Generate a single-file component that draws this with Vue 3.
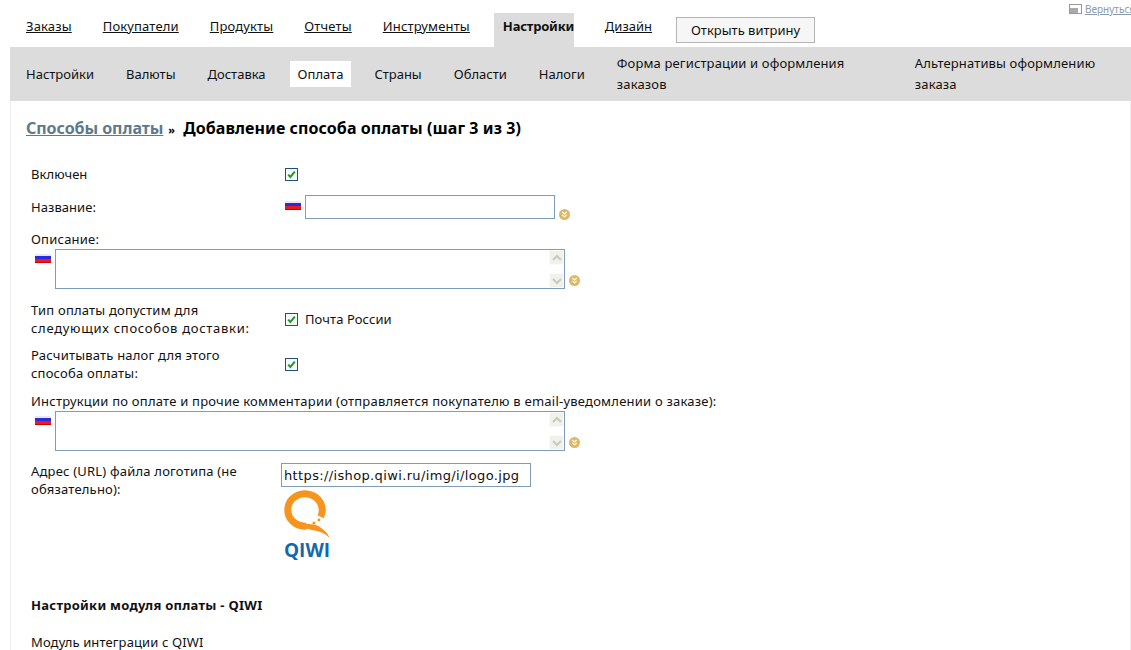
<script setup>
const mainTabs = ['Заказы', 'Покупатели', 'Продукты', 'Отчеты', 'Инструменты']
const subTabs = ['Настройки', 'Валюты', 'Доставка', 'Оплата', 'Страны', 'Области', 'Налоги']
</script>

<template>
  <div class="page">
    <a class="back" href="#">
      <svg width="13" height="10" viewBox="0 0 13 10"><rect x="0.5" y="0.5" width="12" height="9" fill="#fff" stroke="#999"/><rect x="1" y="4" width="8" height="5" fill="#aaa"/></svg>
      <span>Вернуться</span>
    </a>
    <nav class="main-nav">
      <a v-for="t in mainTabs" :key="t" href="#" class="main-link">{{ t }}</a>
      <span class="main-active">Настройки</span>
      <a href="#" class="main-link design">Дизайн</a>
      <button class="shop-btn" type="button">Открыть витрину</button>
    </nav>
    <div class="sub-nav">
      <span v-for="t in subTabs" :key="t" class="sub-item" :class="{ active: t === 'Оплата' }">{{ t }}</span>
      <span class="sub-item wide-a">Форма регистрации и оформления заказов</span>
      <span class="sub-item wide-b">Альтернативы оформлению заказа</span>
    </div>
    <main class="content">
      <h1 class="title"><a href="#">Способы оплаты</a><span class="raquo">»</span>Добавление способа оплаты (шаг 3 из 3)</h1>

      <div class="row r-enabled">
        <div class="label">Включен</div>
        <span class="check"><svg width="11" height="11" viewBox="0 0 11 11"><path d="M2.2 5.6 4.4 8 8.8 2.6" fill="none" stroke="#1f9a2c" stroke-width="2"/></svg></span>
      </div>

      <div class="row r-name">
        <div class="label">Название:</div>
        <span class="flag flag-name"></span>
        <input class="field name-input" type="text" />
        <span class="more"><svg width="11" height="11" viewBox="0 0 11 11"><circle cx="5.5" cy="5.5" r="5.5" fill="#dfb862"/><path d="M3.3 3 5.5 5 7.7 3M3.3 5.8 5.5 7.8 7.7 5.8" fill="none" stroke="#fff" stroke-width="1.1"/></svg></span>
      </div>

      <div class="block b-desc">
        <div class="label-full">Описание:</div>
        <div class="ta-row">
          <span class="flag"></span>
          <div class="ta-wrap">
            <textarea class="field area"></textarea>
            <span class="sb up"><svg width="12" height="8" viewBox="0 0 12 8"><path d="M2 6 6 2l4 4" fill="none" stroke="#c9c9c2" stroke-width="2"/></svg></span>
            <span class="sb down"><svg width="12" height="8" viewBox="0 0 12 8"><path d="M2 2l4 4 4-4" fill="none" stroke="#c9c9c2" stroke-width="2"/></svg></span>
          </div>
          <span class="more"><svg width="11" height="11" viewBox="0 0 11 11"><circle cx="5.5" cy="5.5" r="5.5" fill="#dfb862"/><path d="M3.3 3 5.5 5 7.7 3M3.3 5.8 5.5 7.8 7.7 5.8" fill="none" stroke="#fff" stroke-width="1.1"/></svg></span>
        </div>
      </div>

      <div class="row r-ship">
        <div class="label two">Тип оплаты допустим для <span class="stretch">следующих способов доставки:</span></div>
        <span class="check"><svg width="11" height="11" viewBox="0 0 11 11"><path d="M2.2 5.6 4.4 8 8.8 2.6" fill="none" stroke="#1f9a2c" stroke-width="2"/></svg></span>
        <span class="ship-name">Почта России</span>
      </div>

      <div class="row r-tax">
        <div class="label two">Расчитывать налог для этого способа оплаты:</div>
        <span class="check"><svg width="11" height="11" viewBox="0 0 11 11"><path d="M2.2 5.6 4.4 8 8.8 2.6" fill="none" stroke="#1f9a2c" stroke-width="2"/></svg></span>
      </div>

      <div class="block b-instr">
        <div class="label-full">Инструкции по оплате и прочие комментарии (отправляется покупателю в email-уведомлении о заказе):</div>
        <div class="ta-row">
          <span class="flag"></span>
          <div class="ta-wrap">
            <textarea class="field area"></textarea>
            <span class="sb up"><svg width="12" height="8" viewBox="0 0 12 8"><path d="M2 6 6 2l4 4" fill="none" stroke="#c9c9c2" stroke-width="2"/></svg></span>
            <span class="sb down"><svg width="12" height="8" viewBox="0 0 12 8"><path d="M2 2l4 4 4-4" fill="none" stroke="#c9c9c2" stroke-width="2"/></svg></span>
          </div>
          <span class="more"><svg width="11" height="11" viewBox="0 0 11 11"><circle cx="5.5" cy="5.5" r="5.5" fill="#dfb862"/><path d="M3.3 3 5.5 5 7.7 3M3.3 5.8 5.5 7.8 7.7 5.8" fill="none" stroke="#fff" stroke-width="1.1"/></svg></span>
        </div>
      </div>

      <div class="row r-logo">
        <div class="label two logo-label">Адрес (URL) файла логотипа (не обязательно):</div>
        <div class="logo-col">
          <input class="field url-input" type="text" value="https://ishop.qiwi.ru/img/i/logo.jpg" />
          <div class="logo">
            <svg width="46" height="49" viewBox="0 0 46 49">
              <path d="M36.6 26.8A17.2 16.2 0 1 0 22.5 36.1" fill="none" stroke="#f7941e" stroke-width="7"/>
              <path d="M18 33C24 35 30 33 36 37 40 40 44 43 45.5 48 41 43 35 41 28 40 24 39 20 38 18 36Z" fill="#f7941e"/>
              <circle cx="30" cy="33" r="1.6" fill="#f7941e"/>
              <circle cx="35" cy="30" r="1.4" fill="#f7941e"/>
            </svg>
            <span class="qiwi">QIWI</span>
          </div>
        </div>
      </div>

      <div class="section">Настройки модуля оплаты - QIWI</div>
      <div class="module">Модуль интеграции с QIWI</div>
    </main>
  </div>
</template>

<style>
html, body { margin: 0; overflow: hidden; background: #fff; }
</style>

<style scoped>
.page {
  position: relative;
  width: 1131px;
  height: 650px;
  overflow: hidden;
  padding: 13px 0 0 10px;
  box-sizing: border-box;
  font-family: "Noto Sans", "DejaVu Sans", sans-serif;
  font-size: 13px;
  color: #111;
}
.back {
  position: absolute;
  left: 1069px;
  top: 2px;
  display: flex;
  align-items: center;
  gap: 3px;
  color: #8a9aa8;
  font-size: 10px;
  white-space: nowrap;
}
.main-nav {
  display: flex;
  align-items: flex-start;
  height: 34px;
  padding-left: 16px;
}
.main-link {
  margin: 3px 31px 0 0;
  color: #111;
  line-height: 20px;
  text-decoration: underline;
  letter-spacing: 0.15px;
}
.main-active {
  flex: none;
  width: 80px;
  height: 34px;
  margin-left: -7px;
  padding: 3px 0 0 9px;
  box-sizing: border-box;
  background: #dcdcdc;
  font-weight: 700;
  letter-spacing: -0.2px;
  line-height: 20px;
  white-space: nowrap;
}
.design { margin-left: 31px; margin-right: 24px; letter-spacing: 0; }
.shop-btn {
  width: 139px;
  height: 26px;
  margin-top: 4px;
  border: 1px solid #b5b5b5;
  background: #f6f6f6;
  font: inherit;
  color: #111;
  padding: 0;
}
.sub-nav {
  display: flex;
  align-items: center;
  gap: 32px;
  height: 54px;
  padding-left: 16px;
  background: #dcdcdc;
}
.sub-item { line-height: 21px; }
.sub-item.active {
  background: #fff;
  padding: 3px 8px 2px;
  margin: 0 -9px 0 -8px;
}
.wide-a { width: 266px; letter-spacing: 0.14px; }
.wide-b { width: 200px; letter-spacing: 0.14px; }
.content {
  border-left: 1px solid #eee;
  border-right: 1px solid #eee;
  padding: 0 0 0 15px;
}
.title {
  margin: 0;
  padding-top: 17px;
  font-size: 16px;
  line-height: 20px;
  font-weight: 700;
  letter-spacing: 0.08px;
  color: #000;
}
.title a { color: #5d7a8c; text-decoration: underline; letter-spacing: -0.05px; }
.raquo { font-size: 11px; margin: 0 8px 0 5px; }
.row {
  display: flex;
  align-items: flex-start;
  padding-left: 5px;
}
.label { width: 254px; line-height: 18px; flex: none; letter-spacing: 0.05px; }
.label.two { width: 222px; margin-right: 32px; letter-spacing: 0.2px; }
.stretch { letter-spacing: 0.7px; white-space: nowrap; }
.check {
  width: 11px;
  height: 11px;
  flex: none;
  border: 1px solid #1c5180;
  background: #f8f8f8;
  display: block;
}
.check svg { display: block; }
.flag {
  display: block;
  flex: none;
  width: 16px;
  height: 11px;
  background: linear-gradient(#fff 0 2px, #e8e8ee 2px 4px, #2a2ae0 4px 7px, #f01818 7px 10px, #c00 10px);
}
.field {
  display: block;
  box-sizing: border-box;
  border: 1px solid #7f9db9;
  background: #fff;
  outline: none;
  margin: 0;
}
.more { display: block; flex: none; width: 11px; height: 11px; }
.more svg { display: block; }
.r-enabled { margin-top: 25px; height: 18px; align-items: center; }
.r-name { margin-top: 12px; height: 24px; }
.r-name .label { margin-top: 3px; }
.flag-name { margin: 4px 4px 0 0; }
.name-input { width: 250px; height: 24px; }
.r-name .more { margin: 14px 0 0 4px; }
.block { padding-left: 5px; }
.label-full { line-height: 18px; letter-spacing: 0.22px; }
.b-desc { margin-top: 11px; }
.ta-row { display: flex; align-items: flex-start; margin-top: 1px; padding-left: 4px; }
.ta-row .flag { margin: 3px 4px 0 0; }
.ta-wrap { position: relative; width: 510px; height: 40px; flex: none; }
.area { width: 510px; height: 40px; resize: none; overflow: hidden; }
.sb {
  position: absolute;
  right: 1px;
  width: 15px;
  height: 15px;
  background: #f1f1ec;
  display: flex;
  align-items: center;
  justify-content: center;
  box-shadow: inset 0 0 0 1px #fafaf8;
}
.up { top: 1px; }
.down { bottom: 1px; }
.ta-row .more { margin: 26px 0 0 4px; }
.r-ship { margin-top: 12px; height: 36px; align-items: center; }
.ship-name { margin-left: 7px; line-height: 18px; letter-spacing: 0.08px; }
.r-tax { margin-top: 9px; height: 36px; align-items: center; }
.b-instr { margin-top: 10px; }
.r-logo { margin-top: 12px; }
.label.logo-label { margin-top: -1px; width: 218px; margin-right: 32px; }
.logo-col { display: flex; flex-direction: column; }
.url-input {
  width: 250px;
  height: 24px;
  padding: 0 2px;
  font-family: "DejaVu Sans", sans-serif;
  font-size: 13px;
  letter-spacing: 0.36px;
  color: #111;
}
.logo { display: flex; flex-direction: column; padding-left: 3px; margin-top: 3px; }
.logo svg { display: block; }
.qiwi {
  font-family: "Open Sans", sans-serif;
  font-weight: 700;
  font-size: 19px;
  line-height: 22px;
  color: #1567ae;
}
.section { margin: 35px 0 0 5px; font-weight: 700; line-height: 18px; letter-spacing: 0.27px; }
.module { margin: 19px 0 0 5px; line-height: 18px; letter-spacing: 0.12px; }
</style>
